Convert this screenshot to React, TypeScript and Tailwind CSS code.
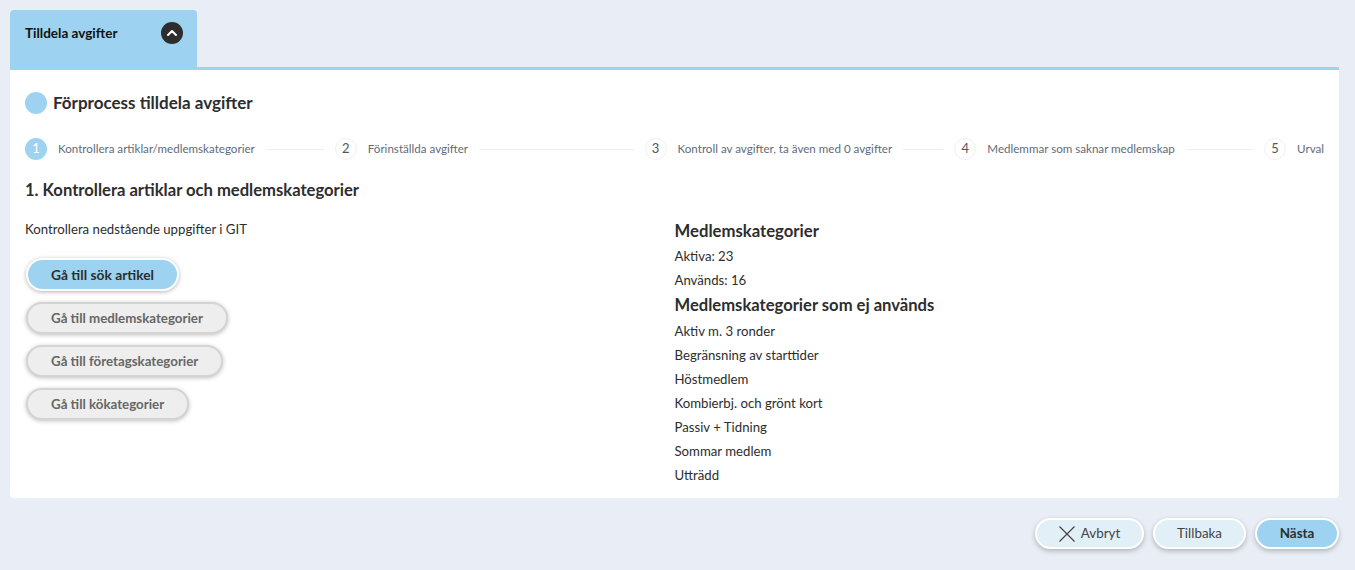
import { ChevronUp } from 'lucide-react';

const steps = [
  'Kontrollera artiklar/medlemskategorier',
  'Förinställda avgifter',
  'Kontroll av avgifter, ta även med 0 avgifter',
  'Medlemmar som saknar medlemskap',
];

const unusedCategories = [
  'Aktiv m. 3 ronder',
  'Begränsning av starttider',
  'Höstmedlem',
  'Kombierbj. och grönt kort',
  'Passiv + Tidning',
  'Sommar medlem',
  'Utträdd',
];

const linkButtons = ['Gå till medlemskategorier', 'Gå till företagskategorier', 'Gå till kökategorier'];

function StepCircle({ n, active }: { n: number; active?: boolean }) {
  return (
    <span
      className={`flex h-[22px] w-[22px] shrink-0 items-center justify-center rounded-full text-[13px] ${
        active ? 'bg-[#9dd3f0] text-white' : 'border border-[#f0f0f0] bg-white text-[#555555]'
      }`}
    >
      {n}
    </span>
  );
}

export default function App() {
  return (
    <div className="h-[570px] overflow-hidden bg-[#e9eef6] pl-[10px] pr-[16px] pt-[10px] text-[#2d2d2d] font-['Lato',sans-serif]">
      {/* Tab */}
      <div className="flex h-[57px] w-[187px] items-start justify-between rounded-t-[4px] bg-[#9dd3f0] pl-[15px] pr-[14px] pt-[12px]">
        <span className="text-[13.5px] font-bold leading-[22px] text-[#111111]">Tilldela avgifter</span>
        <span className="flex h-[22px] w-[22px] items-center justify-center rounded-full bg-[#2d2d2d]">
          <ChevronUp className="h-4 w-4 text-white" strokeWidth={3} />
        </span>
      </div>

      {/* Panel */}
      <div className="h-[431px] rounded-b-[4px] border-t-[3px] border-[#9dd3f0] bg-white px-[15px] pt-[22px]">
        <div className="flex h-[22px] items-center gap-[6px]">
          <span className="h-[22px] w-[22px] rounded-full bg-[#9dd3f0]" />
          <h1 className="text-[17px] font-bold">Förprocess tilldela avgifter</h1>
        </div>

        {/* Stepper */}
        <div className="mt-[24px] flex h-[22px] items-center">
          {steps.map((label, i) => (
            <div key={label} className="flex w-[310.25px] items-center">
              <StepCircle n={i + 1} active={i === 0} />
              <span className="ml-[11px] whitespace-nowrap text-[11.6px] text-[#5f6b7a]">{label}</span>
              <span className="mx-[11px] h-px flex-1 bg-[#eeeeee]" />
            </div>
          ))}
          <StepCircle n={5} />
          <span className="ml-[11px] text-[11.6px] text-[#5f6b7a]">Urval</span>
        </div>

        <h2 className="mt-[19px] text-[16.6px] font-bold leading-[22px]">1. Kontrollera artiklar och medlemskategorier</h2>

        <div className="mt-[19px] grid grid-cols-2">
          <div>
            <p className="mt-[-3px] text-[13.2px] leading-[24px]">Kontrollera nedstående uppgifter i GIT</p>
            <div className="mt-[17px] flex flex-col items-start gap-[11px] pl-px">
              <button className="h-[33px] w-[153px] rounded-full border-2 border-white bg-[#9dd3f0] pt-px text-[13.8px] font-bold shadow-[0_1px_4px_rgba(0,0,0,0.3)]">
                Gå till sök artikel
              </button>
              {linkButtons.map(label => (
                <button
                  key={label}
                  className="h-[32px] rounded-full border-2 border-[#d4d4d4] bg-[#eeeeee] px-[23px] pt-px text-[13.3px] font-bold text-[#666666] shadow-[0_1px_4px_rgba(0,0,0,0.25)]"
                >
                  {label}
                </button>
              ))}
            </div>
          </div>

          <div className="text-[13.2px] leading-[24px]">
            <h3 className="-mt-px text-[16.7px] font-bold leading-[25px]">Medlemskategorier</h3>
            <p>Aktiva: 23</p>
            <p>Används: 16</p>
            <h3 className="text-[16.6px] font-bold leading-[27px]">Medlemskategorier som ej används</h3>
            {unusedCategories.map(name => (
              <p key={name}>{name}</p>
            ))}
          </div>
        </div>
      </div>

      {/* Footer */}
      <div className="mt-[20px] flex justify-end gap-[9px]">
        <button className="flex h-[31px] w-[109px] items-center justify-center gap-[6px] rounded-full border-2 border-white bg-[#e1eff7] text-[13.4px] text-[#444444] shadow-[0_2px_5px_rgba(0,0,0,0.25)]">
          <svg viewBox="0 0 16 16" className="h-4 w-4" fill="none" stroke="currentColor" strokeWidth="1.2">
            <path d="M0.5 0.5L15.5 15.5M15.5 0.5L0.5 15.5" />
          </svg>
          Avbryt
        </button>
        <button className="h-[31px] w-[93px] rounded-full border-2 border-white bg-[#e1eff7] text-[13.4px] text-[#444444] shadow-[0_2px_5px_rgba(0,0,0,0.25)]">
          Tillbaka
        </button>
        <button className="h-[31px] w-[84px] rounded-full border-2 border-white bg-[#9dd3f0] text-[13.4px] font-bold text-[#2d2d2d] shadow-[0_2px_5px_rgba(0,0,0,0.25)]">
          Nästa
        </button>
      </div>
    </div>
  );
}
